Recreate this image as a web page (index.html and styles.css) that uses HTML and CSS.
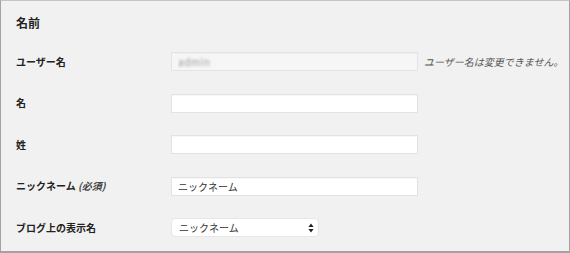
FILE: index.html
```html
<!DOCTYPE html>
<html lang="ja">
<head>
    <meta charset="UTF-8">
    <meta name="viewport" content="width=device-width, initial-scale=1.0">
    <title>プロフィール - 名前</title>
    <link rel="stylesheet" href="styles.css">
</head>
<body>

    <div class="panel">
        <h2>名前</h2>

        <div class="form-table">
            <div class="row">
                <label for="user_login">ユーザー名</label>
                <div class="field">
                    <input type="text" id="user_login" class="blurred" value="admin" disabled>
                    <span class="description">ユーザー名は変更できません。</span>
                </div>
            </div>

            <div class="row">
                <label for="first_name">名</label>
                <div class="field">
                    <input type="text" id="first_name" value="">
                </div>
            </div>

            <div class="row">
                <label for="last_name">姓</label>
                <div class="field">
                    <input type="text" id="last_name" value="">
                </div>
            </div>

            <div class="row">
                <label for="nickname">ニックネーム <span class="required">(必須)</span></label>
                <div class="field">
                    <input type="text" id="nickname" value="ニックネーム">
                </div>
            </div>

            <div class="row">
                <label for="display_name">ブログ上の表示名</label>
                <div class="field">
                    <span class="select-wrap">
                        <select id="display_name">
                            <option>ニックネーム</option>
                            <option>admin</option>
                        </select>
                        <svg class="select-arrows" width="6" height="10" viewBox="0 0 6 10">
                            <path d="M3 0.5 L5.6 4 L0.4 4 Z" fill="#222"/>
                            <path d="M3 9.5 L5.6 6 L0.4 6 Z" fill="#222"/>
                        </svg>
                    </span>
                </div>
            </div>
        </div>
    </div>

</body>
</html>
```

FILE: styles.css
```css
html, body {
    margin: 0;
    padding: 0;
}
body {
    font-family: "Noto Sans CJK JP", "Noto Sans", sans-serif;
    color: #222;
    background-color: #f1f1f1;
}
.panel {
    box-sizing: border-box;
    width: 570px;
    height: 253px;
    border: 1px solid #a3a3a3;
    border-top-color: #c4c4c4;
    border-bottom-width: 2px;
    background-color: #f1f1f1;
    padding: 0 0 0 15px;
    overflow: hidden;
}
h2 {
    margin: 0;
    padding-top: 14px;
    height: 25.75px;
    font-size: 12px;
    line-height: 16px;
    font-weight: bold;
}
.row {
    display: grid;
    grid-template-columns: 155px 1fr;
    align-items: center;
    height: 41.5px;
}
label {
    font-size: 10px;
    font-weight: bold;
    line-height: 14px;
}
.required {
    font-style: italic;
    font-weight: bold;
    color: #444;
}
.field {
    display: flex;
    align-items: center;
    gap: 6px;
}
input, select {
    box-sizing: border-box;
    height: 19px;
    font-family: inherit;
    font-size: 10px;
    color: #333;
    margin: 0;
}
input[type="text"] {
    width: 247px;
    padding: 0 6px;
    border: 1px solid #e2e2e2;
    background-color: #fff;
    box-shadow: inset 0 1px 1px rgba(0, 0, 0, 0.03);
}
input.blurred {
    background-color: #f6f6f6;
    border-color: #e4e4e4;
    color: transparent;
    -webkit-text-fill-color: transparent;
    text-shadow: 0 0 3px #9a9a9a;
    letter-spacing: 0.5px;
    font-weight: normal;
}
.description {
    font-size: 10px;
    font-style: italic;
    color: #555;
}
.select-wrap {
    position: relative;
    display: flex;
}
select {
    width: 148px;
    padding: 0 18px 0 7px;
    border: 1px solid #e6e6e6;
    border-radius: 4px;
    background-color: #fff;
    -webkit-appearance: none;
    appearance: none;
}
.select-arrows {
    position: absolute;
    right: 5px;
    top: 4.5px;
    pointer-events: none;
}
```
